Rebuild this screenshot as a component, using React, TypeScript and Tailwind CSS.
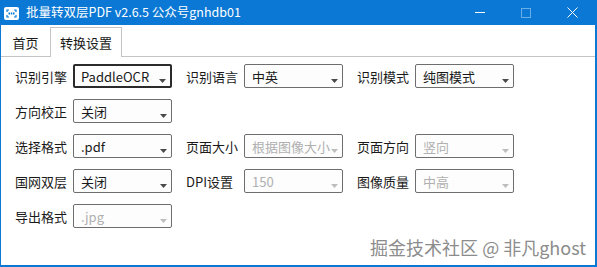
import React from "react";

type Field = {
  label: string;
  value: string;
  disabled?: boolean;
  focused?: boolean;
};

const ROWS: Field[][] = [
  [
    { label: "识别引擎", value: "PaddleOCR", focused: true },
    { label: "识别语言", value: "中英" },
    { label: "识别模式", value: "纯图模式" },
  ],
  [{ label: "方向校正", value: "关闭" }],
  [
    { label: "选择格式", value: ".pdf" },
    { label: "页面大小", value: "根据图像大小", disabled: true },
    { label: "页面方向", value: "竖向", disabled: true },
  ],
  [
    { label: "国网双层", value: "关闭" },
    { label: "DPI设置", value: "150", disabled: true },
    { label: "图像质量", value: "中高", disabled: true },
  ],
  [{ label: "导出格式", value: ".jpg", disabled: true }],
];

const FONT = {
  fontFamily: '"Segoe UI", "Noto Sans CJK SC", "Noto Sans", sans-serif',
};

function AppIcon() {
  return (
    <svg width="15" height="13" viewBox="0 0 15 13">
      <rect x="0" y="0" width="15" height="13" rx="2" fill="#fff" />
      <path
        d="M3 5V3h2M10 3h2v2M12 8v2h-2M5 10H3V8"
        fill="none"
        stroke="#0078d7"
        strokeWidth="1.2"
      />
      <rect x="4.5" y="5.5" width="1.5" height="2" fill="#0078d7" />
      <rect x="6.8" y="5.5" width="1.5" height="2" fill="#0078d7" />
      <rect x="9" y="5.5" width="1.5" height="2" fill="#0078d7" />
    </svg>
  );
}

function Combo({ field }: { field: Field }) {
  const border = field.focused
    ? "border-2 border-[#2b2b2b] pl-[6px]"
    : "border border-[#6e6e6e] pl-[7px]";
  return (
    <div
      className={`relative flex h-[24px] w-[99px] items-center rounded-[2px] bg-[#fdfdfd] ${border}`}
    >
      <span
        className={`text-[13px] leading-none ${
          field.disabled ? "text-[#b0b0b0]" : "text-[#1a1a1a]"
        }`}
      >
        {field.value}
      </span>
      <svg
        className={`absolute right-[4px] ${field.focused ? "bottom-[3px]" : "bottom-[4px]"}`}
        width="7"
        height="4"
        viewBox="0 0 7 4"
      >
        <path
          d="M0 0h7L3.5 4z"
          fill={field.disabled ? "#bdbdbd" : "#4a4a4a"}
        />
      </svg>
    </div>
  );
}

export default function App() {
  return (
    <div
      className="relative flex h-[267px] w-[597px] flex-col overflow-hidden border-b-2 border-l border-r-2 border-[#0a78d4] bg-white"
      style={FONT}
    >
      {/* title bar */}
      <div className="flex h-[25px] shrink-0 items-center bg-[#0a78d4] text-white">
        <div className="ml-[3px] mt-[1px]">
          <AppIcon />
        </div>
        <span className="ml-[7px] text-[12.5px] leading-none">
          批量转双层PDF v2.6.5 公众号gnhdb01
        </span>
        <div className="ml-auto flex items-center">
          <div className="flex h-[25px] w-[46px] items-center justify-center">
            <div className="h-px w-[10px] bg-white" />
          </div>
          <div className="flex h-[25px] w-[46px] items-center justify-center">
            <div className="h-[10px] w-[10px] border border-[#6aaee6]" />
          </div>
          <div className="flex h-[25px] w-[46px] items-center justify-center">
            <svg width="11" height="11" viewBox="0 0 11 11">
              <path d="M0.5 0.5l10 10M10.5 0.5l-10 10" stroke="#fff" strokeWidth="1" />
            </svg>
          </div>
        </div>
      </div>

      {/* tabs */}
      <div className="flex h-[32px] shrink-0 items-end border-b border-[#c4c4c4] text-[13px] text-[#1a1a1a]">
        <div className="flex h-[28px] w-[49px] items-center justify-center pt-[2px]">
          首页
        </div>
        <div className="-mb-px flex h-[30px] w-[72px] items-center justify-center border border-b-0 border-[#c4c4c4] bg-white">
          转换设置
        </div>
      </div>

      {/* settings */}
      <div className="flex flex-col gap-[11px] pl-[13px] pt-[7px] text-[13px] text-[#1a1a1a]">
        {ROWS.map((row, i) => (
          <div key={i} className="flex items-center">
            {row.map((f) => (
              <div key={f.label} className="mr-[13px] flex items-center">
                <span className="w-[59px] pl-px leading-none">{f.label}</span>
                <Combo field={f} />
              </div>
            ))}
          </div>
        ))}
      </div>

      <div
        className="absolute bottom-[9px] right-[9px] text-[18px] leading-none text-[#8c8c8c]"
        style={{ textShadow: "0 0 2px #fff, 1px 1px 1px #fff" }}
      >
        掘金技术社区 @ 非凡ghost
      </div>
    </div>
  );
}
